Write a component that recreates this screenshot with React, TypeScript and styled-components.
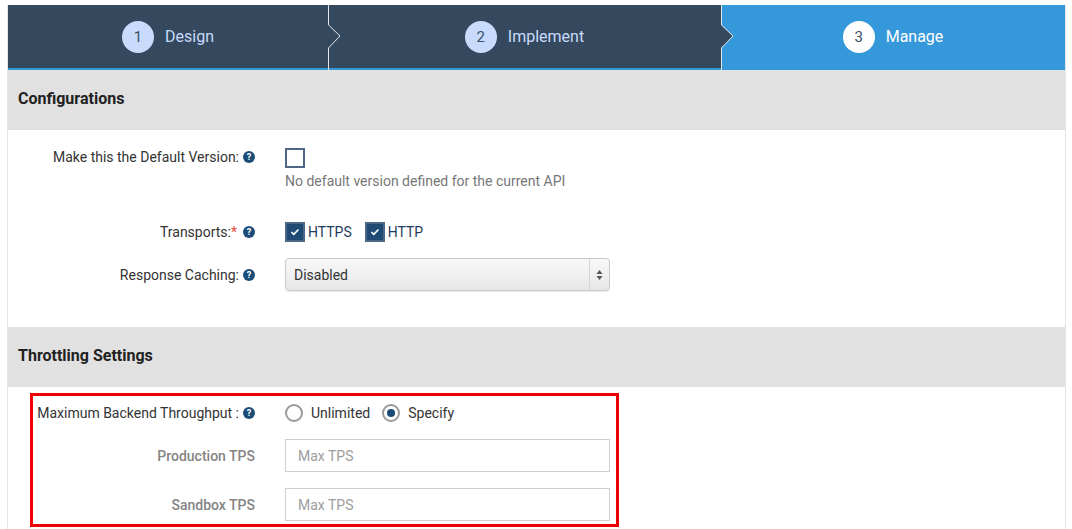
import React from 'react';
import styled, { createGlobalStyle } from 'styled-components';

const Global = createGlobalStyle`
  html, body { margin: 0; padding: 0; background: #fff; }
  body { font-family: Roboto, "Liberation Sans", Arial, sans-serif; color: #333; }
  * { box-sizing: border-box; }
`;

const Page = styled.div`
  padding: 5px 0 0 7px;
  width: 1072px;
`;

const Panel = styled.div`
  width: 1059px;
  min-height: 524px;
  border-left: 1px solid #e4e4e4;
  border-right: 1px solid #e4e4e4;
`;

const Wizard = styled.div`
  display: flex;
  height: 65px;
  border-bottom: 2px solid #3498db;
`;

const Step = styled.div<{ $w: number; $active?: boolean }>`
  position: relative;
  flex: 0 0 ${p => p.$w}px;
  background: ${p => (p.$active ? '#3598db' : '#34495e')};
  display: flex;
  align-items: center;
  justify-content: center;
  gap: 11px;
`;

const StepNum = styled.span<{ $active?: boolean }>`
  width: 32px;
  height: 32px;
  border-radius: 50%;
  background: ${p => (p.$active ? '#ffffff' : '#c8dbfc')};
  color: #3d4f66;
  font-size: 15px;
  display: flex;
  align-items: center;
  justify-content: center;
`;

const StepLabel = styled.span<{ $active?: boolean }>`
  font-size: 16px;
  color: ${p => (p.$active ? '#ffffff' : '#c8dbfc')};
`;

const Chevron = styled.svg`
  position: absolute;
  left: 100%;
  top: 0;
  z-index: 2;
  overflow: visible;
`;

const SectionHeader = styled.div`
  height: 60px;
  background: #e1e1e1;
  display: flex;
  align-items: center;
  padding: 0 0 4px 10px;
  font-size: 16px;
  font-weight: 700;
  color: #222;
`;

const ConfigBody = styled.div`
  padding: 18px 0 36px;
  display: flex;
  flex-direction: column;
`;

const FormRow = styled.div<{ $labelW: number; $mt?: number }>`
  display: grid;
  grid-template-columns: ${p => p.$labelW}px 325px;
  column-gap: 30px;
  align-items: start;
  margin-top: ${p => p.$mt ?? 0}px;
`;

const Label = styled.div<{ $h: number; $muted?: boolean }>`
  height: ${p => p.$h}px;
  display: flex;
  align-items: center;
  justify-content: flex-end;
  gap: 4px;
  font-size: 14px;
  white-space: nowrap;
  color: ${p => (p.$muted ? '#858585' : '#333')};
  font-weight: ${p => (p.$muted ? 500 : 400)};
`;

const Req = styled.span`
  color: #e74c3c;
  margin-left: -4px;
  margin-right: 2px;
`;

const Help = styled.span`
  width: 12px;
  height: 12px;
  border-radius: 50%;
  background: #1c4d7a;
  color: #fff;
  font-size: 9px;
  font-weight: 700;
  display: inline-flex;
  align-items: center;
  justify-content: center;
  flex: 0 0 12px;
`;

const Control = styled.div`
  display: flex;
  flex-direction: column;
`;

const Inline = styled.div<{ $gap: number }>`
  display: flex;
  align-items: center;
  height: 20px;
  gap: ${p => p.$gap}px;
`;

const Box = styled.span<{ $checked?: boolean }>`
  width: 20px;
  height: 20px;
  border: 2px solid #4d6887;
  background: ${p => (p.$checked ? '#1e4a73' : '#fff')};
  display: inline-flex;
  align-items: center;
  justify-content: center;
  flex: 0 0 20px;
`;

const CheckItem = styled.label`
  display: inline-flex;
  align-items: center;
  gap: 3px;
  font-size: 14px;
  color: #1f3c5e;
`;

const Hint = styled.div`
  margin-top: 3px;
  line-height: 20px;
  font-size: 14px;
  color: #777;
`;

const SelectBox = styled.div`
  height: 33px;
  border: 1px solid #c9c9c9;
  border-radius: 4px;
  background: linear-gradient(to bottom, #f7f7f7 0%, #efefef 60%, #e6e6e6 100%);
  box-shadow: 0 1px 1px rgba(0, 0, 0, 0.08);
  display: flex;
  align-items: center;
  font-size: 14px;
  color: #333;
`;

const SelectText = styled.span`
  flex: 1;
  padding-left: 8px;
`;

const SelectArrows = styled.span`
  width: 20px;
  height: 100%;
  border-left: 1px solid #d4d4d4;
  display: flex;
  align-items: center;
  justify-content: center;
`;

const ThrottleBody = styled.div`
  padding: 6px 0 0 22px;
`;

const RedBox = styled.div`
  width: 589px;
  border: 3px solid #f00000;
  padding: 7px 6px 3px 0;
  display: flex;
  flex-direction: column;
`;

const RadioItem = styled.label`
  display: inline-flex;
  align-items: center;
  gap: 8px;
  font-size: 14px;
  color: #333;
`;

const Radio = styled.span<{ $checked?: boolean }>`
  width: 18px;
  height: 18px;
  border-radius: 50%;
  border: 2px solid #9a9a9a;
  background: #fff;
  display: inline-flex;
  align-items: center;
  justify-content: center;
  &::after {
    content: '';
    width: 8px;
    height: 8px;
    border-radius: 50%;
    background: ${p => (p.$checked ? '#1b4a75' : 'transparent')};
  }
`;

const TextInput = styled.input`
  height: 33px;
  width: 325px;
  border: 1px solid #cfcfcf;
  border-radius: 0;
  padding: 0 12px;
  font-family: inherit;
  font-size: 14px;
  color: #333;
  outline: none;
  &::placeholder { color: #9d9d9d; }
`;

const Check = () => (
  <svg width="10" height="8" viewBox="0 0 10 8">
    <polyline points="1.5,4.2 3.8,6.3 8.5,1.5" fill="none" stroke="#fff" strokeWidth="1.6" />
  </svg>
);

const Sep = ({ fill }: { fill: string }) => (
  <Chevron width="14" height="65" viewBox="0 0 14 65">
    <polygon points="0,20 12,31 0,43" fill={fill} />
    <polyline points="0.5,0 0.5,20 12,31 0.5,43 0.5,65" fill="none" stroke="#e6e6e6" strokeWidth="1" />
  </Chevron>
);

export default function App() {
  return (
    <>
      <Global />
      <Page>
        <Panel>
          <Wizard>
            <Step $w={320}>
              <StepNum>1</StepNum>
              <StepLabel>Design</StepLabel>
              <Sep fill="#34495e" />
            </Step>
            <Step $w={393}>
              <StepNum>2</StepNum>
              <StepLabel>Implement</StepLabel>
              <Sep fill="#34495e" />
            </Step>
            <Step $w={344} $active>
              <StepNum $active>3</StepNum>
              <StepLabel $active>Manage</StepLabel>
            </Step>
          </Wizard>

          <SectionHeader>Configurations</SectionHeader>
          <ConfigBody>
            <FormRow $labelW={247}>
              <Label $h={18}>
                Make this the Default Version: <Help>?</Help>
              </Label>
              <Control>
                <Box />
                <Hint>No default version defined for the current API</Hint>
              </Control>
            </FormRow>
            <FormRow $labelW={247} $mt={31}>
              <Label $h={20}>
                Transports:<Req>*</Req> <Help>?</Help>
              </Label>
              <Inline $gap={13}>
                <CheckItem>
                  <Box $checked>
                    <Check />
                  </Box>
                  HTTPS
                </CheckItem>
                <CheckItem>
                  <Box $checked>
                    <Check />
                  </Box>
                  HTTP
                </CheckItem>
              </Inline>
            </FormRow>
            <FormRow $labelW={247} $mt={16}>
              <Label $h={33}>
                Response Caching: <Help>?</Help>
              </Label>
              <SelectBox>
                <SelectText>Disabled</SelectText>
                <SelectArrows>
                  <svg width="7" height="12" viewBox="0 0 7 12">
                    <polygon points="3.5,1 6.5,5 0.5,5" fill="#555" />
                    <polygon points="0.5,7 6.5,7 3.5,11" fill="#555" />
                  </svg>
                </SelectArrows>
              </SelectBox>
            </FormRow>
          </ConfigBody>

          <SectionHeader>Throttling Settings</SectionHeader>
          <ThrottleBody>
            <RedBox>
              <FormRow $labelW={222}>
                <Label $h={20}>
                  Maximum Backend Throughput : <Help>?</Help>
                </Label>
                <Inline $gap={12}>
                  <RadioItem>
                    <Radio />
                    Unlimited
                  </RadioItem>
                  <RadioItem>
                    <Radio $checked />
                    Specify
                  </RadioItem>
                </Inline>
              </FormRow>
              <FormRow $labelW={222} $mt={16}>
                <Label $h={33} $muted>Production TPS</Label>
                <TextInput placeholder="Max TPS" />
              </FormRow>
              <FormRow $labelW={222} $mt={16}>
                <Label $h={33} $muted>Sandbox TPS</Label>
                <TextInput placeholder="Max TPS" />
              </FormRow>
            </RedBox>
          </ThrottleBody>
        </Panel>
      </Page>
    </>
  );
}
